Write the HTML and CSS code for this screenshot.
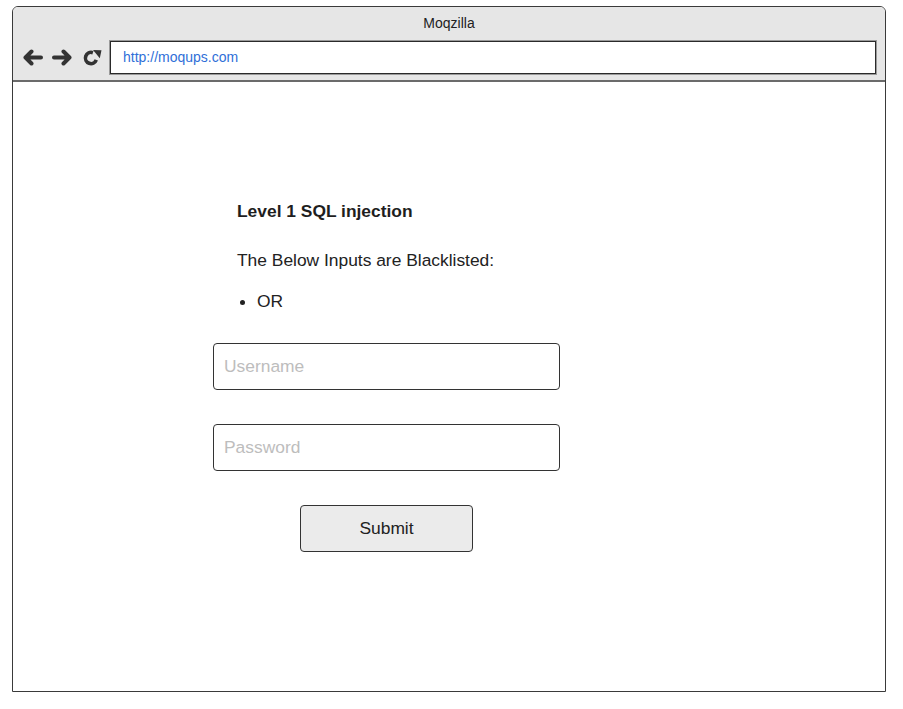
FILE: index.html
```html
<!DOCTYPE html>
<html>
<head>
<meta charset="utf-8">
<title>Moqzilla</title>
<link rel="stylesheet" href="styles.css">
</head>
<body>
<div class="browser">
  <div class="chrome">
    <div class="title">Moqzilla</div>
    <div class="toolbar">
      <svg class="icon" width="21" height="17" viewBox="0 0 21 17"><path d="M19 8.5H3.5M9.5 2.5L3.5 8.5l6 6" fill="none" stroke="#333" stroke-width="4" stroke-linecap="round" stroke-linejoin="round"/></svg>
      <svg class="icon" width="21" height="17" viewBox="0 0 21 17"><path d="M2 8.5h15.5M11.5 2.5l6 6-6 6" fill="none" stroke="#333" stroke-width="4" stroke-linecap="round" stroke-linejoin="round"/></svg>
      <svg class="icon refresh" width="20" height="17" viewBox="0 0 20 17"><path d="M10.9 3.7A5.6 5.6 0 1 0 14.3 10.9" fill="none" stroke="#333" stroke-width="3.6"/><path d="M11 1L19.5 1.2 17.8 9.2Z" fill="#333"/></svg>
      <div class="url">http://moqups.com</div>
    </div>
  </div>
  <div class="page">
    <h1 class="heading">Level 1 SQL injection</h1>
    <p class="intro">The Below Inputs are Blacklisted:</p>
    <ul class="list">
      <li>OR</li>
    </ul>
    <form class="form">
      <input class="field" type="text" placeholder="Username">
      <input class="field" type="password" placeholder="Password">
      <button class="submit" type="button">Submit</button>
    </form>
  </div>
</div>
</body>
</html>
```
FILE: styles.css
```css
* { box-sizing: border-box; }
html, body { margin: 0; padding: 0; background: #fff; }
body {
  font-family: "Liberation Sans", Arial, sans-serif;
  color: #222;
}
.browser {
  margin: 6px 0 0 12px;
  width: 874px;
  height: 686px;
  border: 1px solid #3a3a3a;
  border-radius: 6px 6px 0 0;
  display: flex;
  flex-direction: column;
  box-shadow: 0 1px 0 #bbb;
}
.chrome {
  background: #e6e6e6;
  border-radius: 5px 5px 0 0;
  border-bottom: 2px solid #6b6b6b;
  height: 75px;
  padding-top: 8px;
}
.title {
  text-align: center;
  font-size: 14px;
  line-height: 16px;
  color: #222;
}
.toolbar {
  display: flex;
  align-items: center;
  margin-top: 10px;
  padding: 0 9px 0 9px;
}
.icon { display: block; flex: none; margin-right: 9px; }
.icon.refresh { margin-right: 8px; }
.url {
  flex: 1;
  height: 33px;
  border: 1px solid #2a2a2a;
  box-shadow: 0 0 0 1px #9a9a9a;
  background: #fff;
  color: #2f6fd8;
  font-size: 14px;
  line-height: 31px;
  padding-left: 12px;
}
.page {
  flex: 1;
  padding: 119px 0 0 200px;
  display: flex;
  flex-direction: column;
}
.heading {
  margin: 0 0 29px 24px;
  font-size: 17.4px;
  line-height: 20px;
  font-weight: bold;
  color: #1e1e1e;
}
.intro {
  margin: 0 0 21px 24px;
  font-size: 17.4px;
  line-height: 20px;
}
.list {
  margin: 0 0 32px 24px;
  padding: 0 0 0 20px;
  font-size: 17.4px;
  line-height: 20px;
}
.form {
  display: flex;
  flex-direction: column;
  width: 347px;
}
.field {
  height: 47px;
  border: 1px solid #333;
  border-radius: 4px;
  padding: 0 10px;
  font-family: "Liberation Sans", Arial, sans-serif;
  font-size: 17.4px;
  color: #222;
  margin-bottom: 34px;
  outline: none;
}
.field::placeholder { color: #bdbdbd; }
.submit {
  align-self: center;
  width: 173px;
  height: 47px;
  border: 1px solid #333;
  border-radius: 4px;
  background: #ebebeb;
  font-family: "Liberation Sans", Arial, sans-serif;
  font-size: 17.4px;
  color: #222;
}
```
